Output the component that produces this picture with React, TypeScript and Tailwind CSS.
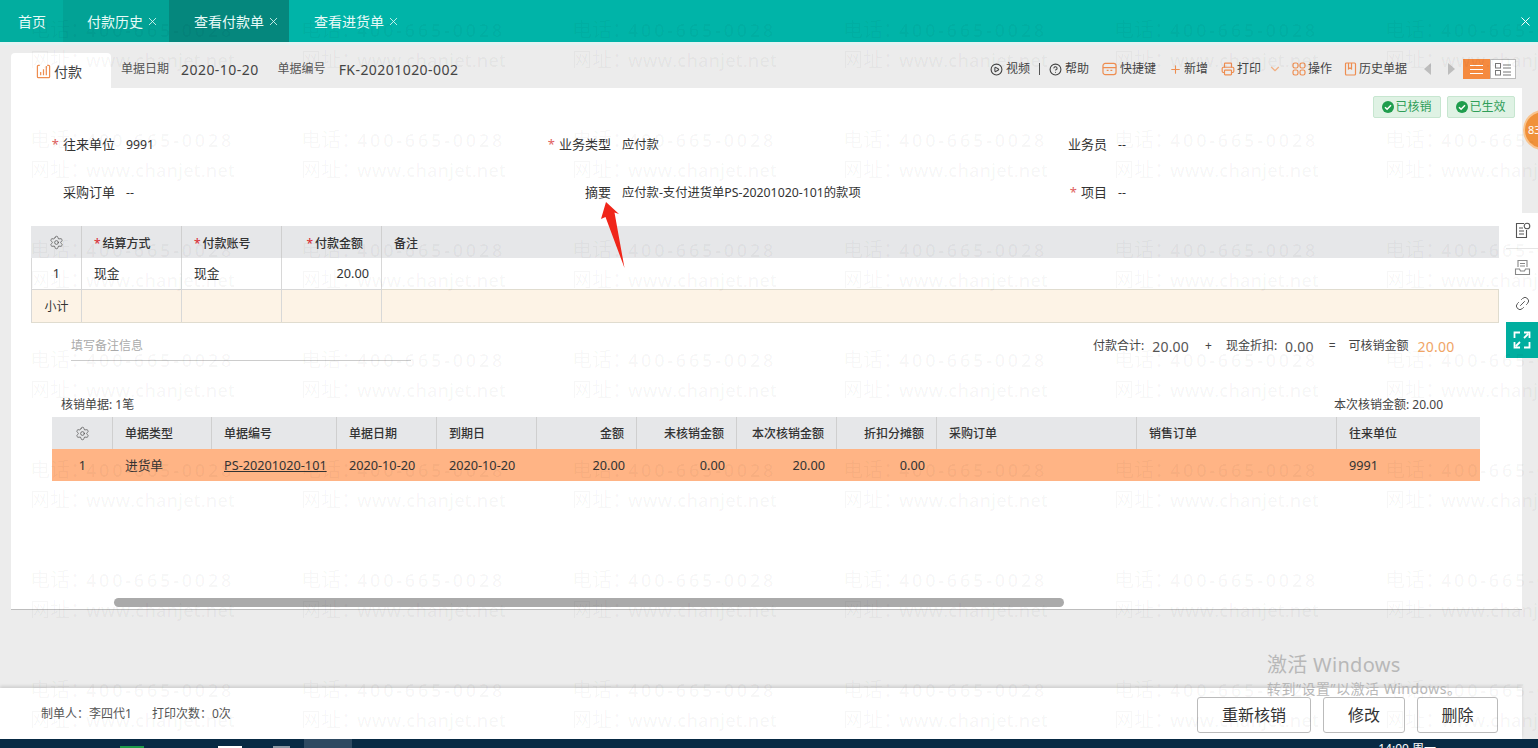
import React from 'react';
import { ChevronDown, CircleHelp, CirclePlay, Link2, Plus, Printer, Settings, X } from 'lucide-react';

const font = 'font-["Noto_Sans","Noto_Sans_CJK_SC",sans-serif]';

const Watermark = () => (
  <div className="absolute left-0 top-0 w-[1538px] h-[739px] overflow-hidden pointer-events-none pl-[30px] pt-[15px]">
    <div className="grid grid-cols-[repeat(6,271px)] auto-rows-[110px] w-[1626px]">
      {Array.from({ length: 42 }).map((_, i) => (
        <div key={i} className="leading-[30px] font-['Open_Sans','Noto_Sans_CJK_SC',sans-serif] font-semibold text-black/[0.04] whitespace-nowrap">
          <div className="text-[18px] tracking-[2.8px]">
            <span className="inline-block w-[56px] text-[20px] tracking-normal font-normal">电话：</span>400-665-0028
          </div>
          <div className="text-[18px] tracking-[0.1px]">
            <span className="inline-block w-[56px] text-[20px] tracking-normal font-normal">网址：</span>www.chanjet.net
          </div>
        </div>
      ))}
    </div>
  </div>
);

const Tab = ({ label, className }: { label: string; className: string }) => (
  <div className={`h-full flex items-center text-[14px] text-[#e8fbf8] ${className}`}>
    <span>{label}</span>
    <X size={13} strokeWidth={1.5} className="ml-[3px] mt-[1px]" />
  </div>
);

const ToolItem = ({ icon, label, gap = 'gap-[2px]' }: { icon: React.ReactNode; label: string; gap?: string }) => (
  <div className={`flex items-center text-[12px] text-[#444] ${gap}`}>
    {icon}
    <span>{label}</span>
  </div>
);

const Req = () => <span className="text-[#d9323a] mr-[2px]">*</span>;

const Field = ({ label, value, req }: { label: string; value: string; req?: boolean }) => (
  <div className="flex items-center text-[#333]">
    <div className="w-[104px] text-right text-[13px]">
      {req && <span className="text-[#e06060] mr-[4px]">*</span>}
      {label}
    </div>
    <div className="ml-[11px] text-[12.3px]">{value}</div>
  </div>
);

const Th = ({ children, className = '' }: { children?: React.ReactNode; className?: string }) => (
  <div className={`h-full flex items-center border-r border-[#cfcfcf] px-[12px] pt-[1px] text-[12px] font-medium text-[#333] ${className}`}>
    {children}
  </div>
);

const Td = ({ children, className = '' }: { children?: React.ReactNode; className?: string }) => (
  <div className={`h-full flex items-center px-[12px] pt-[1px] text-[12.7px] text-[#333] ${className}`}>{children}</div>
);

const FooterButton = ({ label, className }: { label: string; className: string }) => (
  <button className={`h-[36px] mt-[3px] rounded-[3px] border border-[#bbbbbb] bg-white text-[16px] text-[#333] ${className}`}>{label}</button>
);

export default function App() {
  return (
    <div className={`relative w-[1538px] h-[748px] overflow-hidden bg-[#ececec] flex flex-col ${font}`}>
      {/* top tabs */}
      <header className="h-[42px] shrink-0 bg-[#00b4a8] flex items-center">
        <div className="h-full w-[63px] flex items-center pl-[18px] text-[14px] text-[#e8fbf8] bg-[#02ad9f]">首页</div>
        <Tab label="付款历史" className="w-[106px] pl-[24px] bg-[#02a295]" />
        <Tab label="查看付款单" className="w-[120px] pl-[25px] bg-[#05877d]" />
        <Tab label="查看进货单" className="w-[120px] pl-[25px]" />
        <X size={15} strokeWidth={1.6} className="ml-auto mr-[5px] text-white" />
      </header>
      <div className="h-[3px] shrink-0 bg-[#e3f3f2] -mb-[3px]" />

      {/* document toolbar */}
      <div className="h-[46px] shrink-0 pt-[11px] pl-[11px] pr-[22px] flex items-stretch">
        <div className="w-[100px] bg-white rounded-t-[4px] flex items-center pl-[25px] pt-[2px] gap-[3px] text-[14px] text-[#444]">
          <svg width="15" height="15" viewBox="0 0 16 16" fill="none" stroke="#ee8d50" strokeWidth="1.300">
            <path d="M4 1.500H2.500a1 1 0 0 0-1 1v11a1 1 0 0 0 1 1h11a1 1 0 0 0 1-1v-11a1 1 0 0 0-1-1H12" />
            <path d="M5 12V8.500M8 12V5.500M11 12V2" />
          </svg>
          付款
        </div>
        <div className="flex items-center ml-[10px] pb-[3px] text-[#444]">
          <span className="text-[12px] text-[#555]">单据日期</span>
          <span className="ml-[12px] text-[14px] tracking-[0.45px]">2020-10-20</span>
          <span className="ml-[19px] text-[12px] text-[#555]">单据编号</span>
          <span className="ml-[13px] text-[14px] tracking-[0.45px]">FK-20201020-002</span>
        </div>
        <div className="ml-auto flex items-center pb-[3px]">
          <ToolItem icon={<CirclePlay size={13} />} label="视频" gap="gap-[3px]" />
          <div className="mx-[9px] w-px h-[12px] bg-[#555]" />
          <ToolItem icon={<CircleHelp size={13} />} label="帮助" gap="gap-[3px]" />
          <div className="w-[13px]" />
          <ToolItem
            gap="gap-[3px]"
            icon={
              <svg width="15" height="14" viewBox="0 0 16 15" fill="none" stroke="#ee8d50" strokeWidth="1.300">
                <rect x="1" y="1.500" width="14" height="12" rx="2.500" />
                <path d="M1 6h14M5 9h2M9 9h2" />
              </svg>
            }
            label="快捷键"
          />
          <div className="w-[13px]" />
          <ToolItem icon={<Plus size={13} className="text-[#ee8d50]" />} label="新增" />
          <div className="w-[13px]" />
          <ToolItem icon={<Printer size={14} className="text-[#ee8d50]" />} label="打印" />
          <ChevronDown size={14} className="ml-[7px] mr-[10px] text-[#f2b084]" />
          <ToolItem
            icon={
              <svg width="14" height="14" viewBox="0 0 14 14" fill="none" stroke="#ee8d50" strokeWidth="1.200">
                <rect x="1" y="1" width="5" height="5" rx="1.800" />
                <rect x="8" y="1" width="5" height="5" rx="1.800" />
                <rect x="1" y="8" width="5" height="5" rx="1.800" />
                <rect x="8" y="8" width="5" height="5" rx="1.800" />
              </svg>
            }
            label="操作"
          />
          <div className="w-[12px]" />
          <ToolItem
            icon={
              <svg width="13" height="14" viewBox="0 0 13 14" fill="none" stroke="#ee8d50" strokeWidth="1.200">
                <rect x="1.500" y="1" width="10" height="12" rx="1" />
                <path d="M4.500 1v6l1.500-1 1.500 1V1" />
              </svg>
            }
            label="历史单据"
          />
          <svg width="7" height="12" viewBox="0 0 7 12" className="ml-[17px]"><path d="M7 0v12L0 6z" fill="#bdbdbd" /></svg>
          <svg width="7" height="12" viewBox="0 0 7 12" className="ml-[17px]"><path d="M0 0v12l7-6z" fill="#bdbdbd" /></svg>
          <div className="ml-[8px] flex h-[20px]">
            <div className="w-[27px] bg-[#f58a3f] flex flex-col items-center justify-center gap-[3px]">
              <div className="w-[13px] h-px bg-white" />
              <div className="w-[13px] h-px bg-white" />
              <div className="w-[13px] h-px bg-white" />
            </div>
            <div className="w-[26px] bg-white border border-[#bbbbbb] flex items-center justify-center">
              <svg width="16" height="13" viewBox="0 0 16 13" fill="none" stroke="#777" strokeWidth="1">
                <rect x="0.500" y="0.500" width="5" height="4.500" />
                <rect x="0.500" y="7.500" width="5" height="4.500" />
                <path d="M8 2h8M8 5h8M8 9h8M8 12h8" />
              </svg>
            </div>
          </div>
        </div>
      </div>

      {/* document body */}
      <main className="ml-[11px] mr-[16px] h-[522px] shrink-0 bg-white border-b border-[#bdbdbd] flex flex-col">
        <div className="h-[30px] pt-[8px] pr-[7px] flex justify-end gap-[6px]">
          {['已核销', '已生效'].map(t => (
            <div key={t} className="w-[68px] h-[22px] rounded-[2px] bg-[#dff2e4] border border-[#c7e6d0] flex items-center justify-center gap-[1px] text-[12px] text-[#2f9e58]">
              <svg width="12" height="12" viewBox="0 0 12 12">
                <circle cx="6" cy="6" r="6" fill="#1f9d4d" />
                <path d="M3 6.200l2.100 2.100L9 4.200" fill="none" stroke="#fff" strokeWidth="1.500" />
              </svg>
              {t}
            </div>
          ))}
        </div>

        <div className="mt-[3px] grid grid-cols-[496px_496px_1fr] auto-rows-[48px]">
          <Field req label="往来单位" value="9991" />
          <Field req label="业务类型" value="应付款" />
          <Field label="业务员" value="--" />
          <Field label="采购订单" value="--" />
          <Field label="摘要" value="应付款-支付进货单PS-20201020-101的款项" />
          <Field req label="项目" value="--" />
        </div>

        {/* payment table */}
        <div className="mt-[9px] ml-[20px] w-[1468px] grid grid-cols-[51px_100px_100px_100px_1fr] auto-rows-[32px] border-b border-[#e0dccf]">
          <Th className="bg-[#e6e7e9] justify-center"><Settings size={15} strokeWidth={1.2} className="text-[#555]" /></Th>
          <Th className="bg-[#e6e7e9] pt-[3px]"><Req />结算方式</Th>
          <Th className="bg-[#e6e7e9] pt-[3px]"><Req />付款账号</Th>
          <Th className="bg-[#e6e7e9] pt-[3px] pr-[18px] justify-end"><Req />付款金额</Th>
          <div className="bg-[#e6e7e9] h-full flex items-center px-[12px] pt-[3px] text-[12px] font-medium text-[#333]">备注</div>
          <Td className="justify-center border-r border-b border-[#d8d8d8] border-l">1</Td>
          <Td className="border-r border-b border-[#d8d8d8]">现金</Td>
          <Td className="border-r border-b border-[#d8d8d8]">现金</Td>
          <Td className="justify-end border-r border-b border-[#d8d8d8]">20.00</Td>
          <Td className="border-b border-[#e0dccf]" />
          <Td className="justify-center text-[12px] bg-[#fdf3e6] border-l border-r border-[#d8d8d8]">小计</Td>
          <Td className="bg-[#fdf3e6] border-r border-[#d8d8d8]" />
          <Td className="bg-[#fdf3e6] border-r border-[#d8d8d8]" />
          <Td className="bg-[#fdf3e6] border-r border-[#d8d8d8]" />
          <Td className="bg-[#fdf3e6] border-r border-[#e0dccf]" />
        </div>

        {/* remark and totals */}
        <div className="mt-[13px] ml-[60px] flex items-start text-[12px] text-[#444]">
          <div className="w-[340px] h-[25px] border-b border-[#cccccc] text-[#aaaaaa] leading-[20px]">填写备注信息</div>
          <div className="ml-[682px] flex items-center h-[20px]">
            <span>付款合计:</span>
            <span className="ml-[8px] text-[14px] tracking-[0.2px] text-[#555]">20.00</span>
            <span className="ml-[16px]">+</span>
            <span className="ml-[14px]">现金折扣:</span>
            <span className="ml-[8px] text-[14px] tracking-[0.2px] text-[#555]">0.00</span>
            <span className="ml-[15px]">=</span>
            <span className="ml-[13px]">可核销金额</span>
            <span className="ml-[9px] text-[14px] tracking-[0.2px] text-[#f0a566]">20.00</span>
          </div>
        </div>

        <div className="mt-[34px] ml-[50px] w-[1382px] flex justify-between h-[20px] items-center text-[12px] text-[#444]">
          <span>核销单据: 1笔</span>
          <span>本次核销金额: 20.00</span>
        </div>

        {/* write-off table */}
        <div className="mt-[2px] ml-[41px] w-[1428px] grid grid-cols-[61px_99px_125px_100px_100px_100px_100px_100px_100px_200px_200px_1fr] auto-rows-[32px]">
          <Th className="bg-[#e6e7e9] justify-center"><Settings size={15} strokeWidth={1.2} className="text-[#555]" /></Th>
          <Th className="bg-[#e6e7e9]">单据类型</Th>
          <Th className="bg-[#e6e7e9]">单据编号</Th>
          <Th className="bg-[#e6e7e9]">单据日期</Th>
          <Th className="bg-[#e6e7e9]">到期日</Th>
          <Th className="bg-[#e6e7e9] justify-end">金额</Th>
          <Th className="bg-[#e6e7e9] justify-end">未核销金额</Th>
          <Th className="bg-[#e6e7e9] justify-end">本次核销金额</Th>
          <Th className="bg-[#e6e7e9] justify-end">折扣分摊额</Th>
          <Th className="bg-[#e6e7e9]">采购订单</Th>
          <Th className="bg-[#e6e7e9]">销售订单</Th>
          <div className="bg-[#e6e7e9] h-full flex items-center px-[12px] pt-[1px] text-[12px] font-medium text-[#333]">往来单位</div>
          <Td className="bg-[#ffb485] justify-center">1</Td>
          <Td className="bg-[#ffb485]">进货单</Td>
          <Td className="bg-[#ffb485] underline whitespace-nowrap">PS-20201020-101</Td>
          <Td className="bg-[#ffb485]">2020-10-20</Td>
          <Td className="bg-[#ffb485]">2020-10-20</Td>
          <Td className="bg-[#ffb485] justify-end">20.00</Td>
          <Td className="bg-[#ffb485] justify-end">0.00</Td>
          <Td className="bg-[#ffb485] justify-end">20.00</Td>
          <Td className="bg-[#ffb485] justify-end">0.00</Td>
          <Td className="bg-[#ffb485]" />
          <Td className="bg-[#ffb485]" />
          <Td className="bg-[#ffb485]">9991</Td>
        </div>

        <div className="mt-auto mb-[2px] ml-[103px] w-[950px] h-[9px] rounded-full bg-[#aaaaaa]" />
      </main>

      {/* footer */}
      <footer className="mt-[78px] mr-[16px] h-[51px] shrink-0 bg-white shadow-[0_-2px_3px_rgba(0,0,0,0.12)] flex items-center pl-[41px] pr-[24px] text-[12px] text-[#555]">
        <span className="pt-[1px]">制单人：李四代1</span>
        <span className="ml-[20px] pt-[1px]">打印次数：0次</span>
        <div className="ml-auto flex gap-[12px]">
          <FooterButton label="重新核销" className="w-[114px]" />
          <FooterButton label="修改" className="w-[82px]" />
          <FooterButton label="删除" className="w-[81px]" />
        </div>
      </footer>

      {/* windows taskbar, cut off at the bottom of the capture */}
      <div className="h-[9px] shrink-0 bg-[#082a44] flex items-start overflow-hidden">
        <div className="ml-[120px] mt-[7px] w-[24px] h-[2px] bg-[#1e9a4a]" />
        <div className="ml-[74px] mt-[7px] w-[24px] h-[2px] bg-white" />
        <div className="ml-[31px] mt-[7px] w-[17px] h-[2px] bg-[#8a98a4]" />
        <div className="ml-[14px] h-full w-[48px] bg-[#2e4a62]" />
        <div className="ml-auto mr-[102px] mt-[4px] text-[12px] leading-[12px] text-white whitespace-nowrap">14:00 周一</div>
      </div>

      {/* side tools */}
      <div className="absolute right-0 top-[213px] w-[32px] flex flex-col bg-white">
        <div className="h-[36px] flex items-center justify-center border-b border-[#e5e5e5]">
          <svg width="17" height="17" viewBox="0 0 17 17" fill="none" stroke="#555" strokeWidth="1.100">
            <path d="M10 1.500H2.500v14h10V8M5 6h4M5 9h5M5 12h5" />
            <circle cx="13" cy="4" r="2.800" />
          </svg>
        </div>
        <div className="h-[36px] flex items-center justify-center">
          <svg width="17" height="17" viewBox="0 0 17 17" fill="none" stroke="#888" strokeWidth="1.100">
            <path d="M4 8V1.500h9V8M6 4.500h5M6 7h5M1.500 10h4l1 2h4l1-2h4v5.500h-14z" />
          </svg>
        </div>
        <div className="h-[37px] flex items-center justify-center">
          <Link2 size={17} strokeWidth={1.300} className="text-[#555] -rotate-45" />
        </div>
        <div className="h-[36px] bg-[#00ae9f] flex items-center justify-center">
          <svg width="18" height="18" viewBox="0 0 18 18" fill="none" stroke="#fff" strokeWidth="1.800">
            <path d="M7 1.500H1.500V7M11 1.500h5.500V7M1.500 11v5.500H7M16.500 11v5.500H11M11 7l4-4M7 11l-4 4" />
          </svg>
        </div>
      </div>

      {/* floating counter */}
      <div className="absolute left-[1523px] top-[110px] w-[40px] h-[40px] rounded-full bg-[#f0913a] border-2 border-[#f9c48f] pl-[3px] flex items-center text-[11px] text-white">83</div>

      {/* annotation arrow */}
      <svg className="absolute left-[596px] top-[198px]" width="32" height="74" viewBox="0 0 32 74">
        <path d="M10 4L23 16 18.500 14.500 28.500 70 9.500 19 5 21z" fill="#f0261a" />
      </svg>

      {/* windows activation notice */}
      <div className="absolute left-[1267px] top-[652px] text-[#b8b8b8] pointer-events-none whitespace-nowrap">
        <div className="text-[20px] leading-[26px] tracking-[0.3px]">激活 Windows</div>
        <div className="text-[14px] leading-[20px] mt-[1px] tracking-[0.5px]">转到“设置”以激活 Windows。</div>
      </div>

      <Watermark />
    </div>
  );
}
